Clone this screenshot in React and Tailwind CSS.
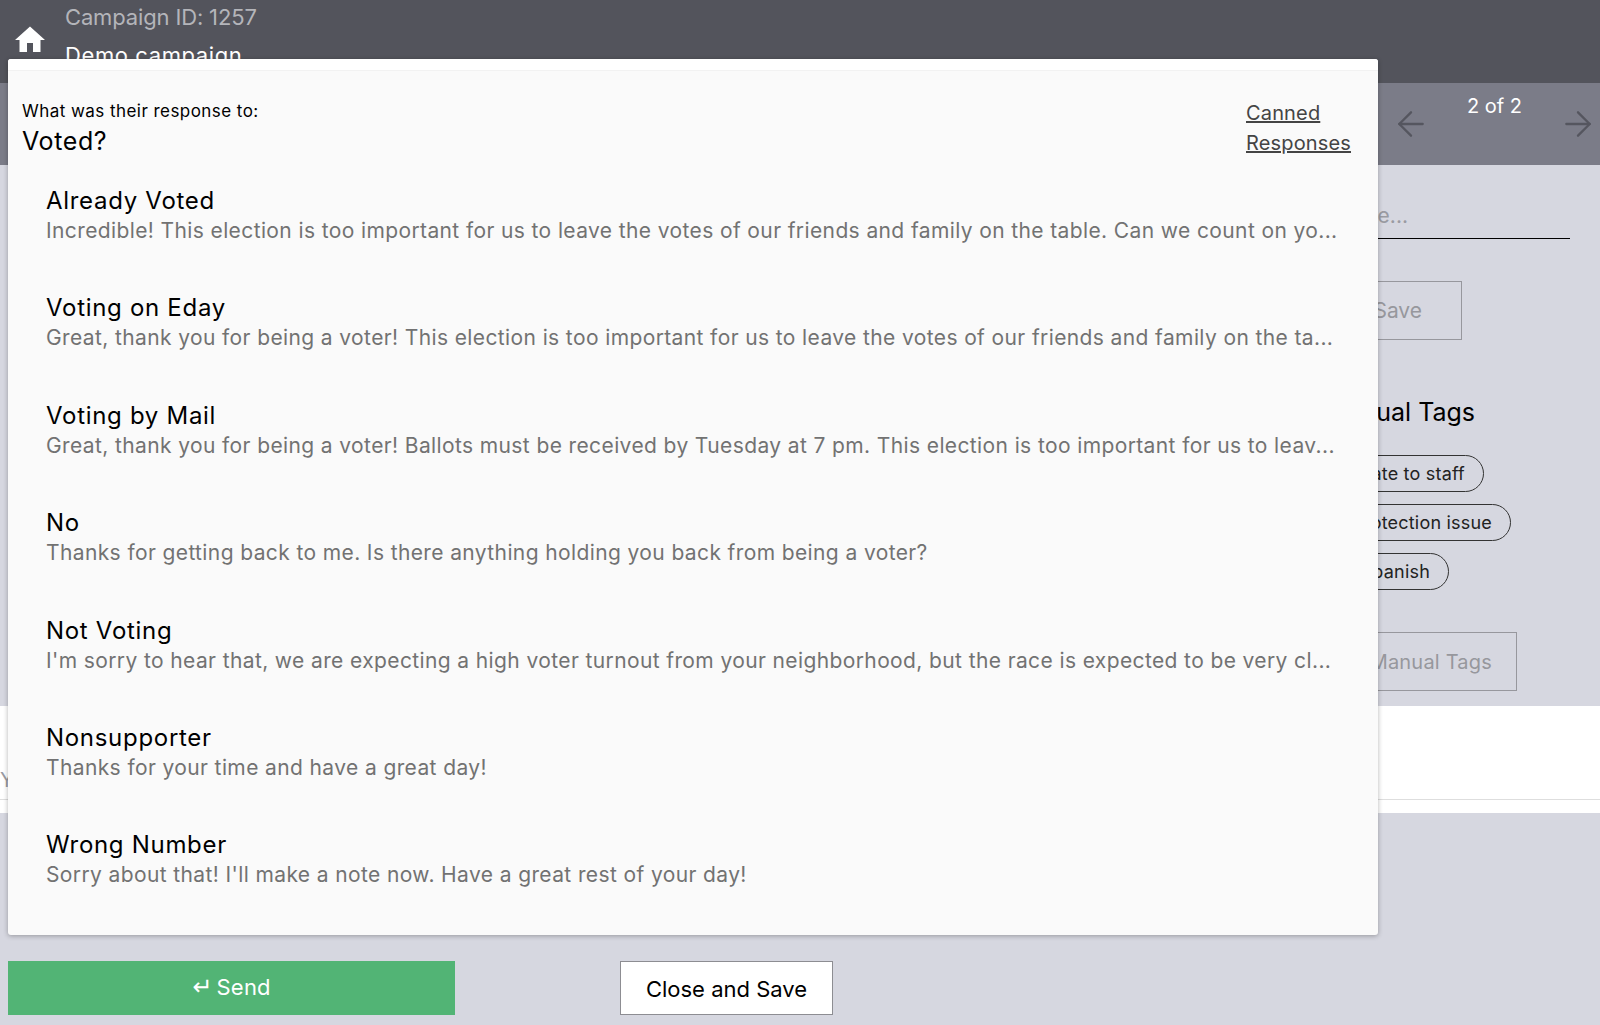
import React from 'react';
import { ArrowLeft, ArrowRight } from 'lucide-react';

const responses = [
  { title: 'Already Voted', text: 'Incredible! This election is too important for us to leave the votes of our friends and family on the table. Can we count on yo...' },
  { title: 'Voting on Eday', text: 'Great, thank you for being a voter! This election is too important for us to leave the votes of our friends and family on the ta...' },
  { title: 'Voting by Mail', text: 'Great, thank you for being a voter! Ballots must be received by Tuesday at 7 pm. This election is too important for us to leav...' },
  { title: 'No', text: 'Thanks for getting back to me. Is there anything holding you back from being a voter?' },
  { title: 'Not Voting', text: "I'm sorry to hear that, we are expecting a high voter turnout from your neighborhood, but the race is expected to be very cl..." },
  { title: 'Nonsupporter', text: 'Thanks for your time and have a great day!' },
  { title: 'Wrong Number', text: "Sorry about that! I'll make a note now. Have a great rest of your day!" },
];

const tags = [
  { label: 'Escalate to staff', width: 'w-[284px]' },
  { label: 'Voter protection issue', width: 'w-[311px]' },
  { label: 'Spanish', width: 'w-[249px]' },
];

function HomeIcon() {
  return (
    <svg viewBox="0 0 24 24" className="w-9 h-9 fill-white">
      <path d="M10 20v-6h4v6h5v-8h3L12 3 2 12h3v8z" />
    </svg>
  );
}

function ResponseDialog() {
  return (
    <div className="absolute left-2 top-[59px] w-[1370px] h-[876px] rounded-[3px] bg-[#fafafa] shadow-[0_1px_5px_rgba(0,0,0,0.3)] overflow-hidden">
      <div className="h-[12px] bg-white border-b border-[#f2f2f2]" />
      <div className="flex justify-between pl-[14px] pr-[26px] pt-[28px]">
        <div>
          <p className="text-[17px] leading-[24px] tracking-[0.45px] text-black">What was their response to:</p>
          <p className="text-[25px] leading-[36px] tracking-[0.6px] text-black">Voted?</p>
        </div>
        <a className="block w-[106px] text-[20px] leading-[30px] tracking-[0.15px] text-[#444] underline -mt-[1px]">Canned Responses</a>
      </div>
      <ul className="mt-[14px] pl-[38px] pr-[30px]">
        {responses.map((r) => (
          <li key={r.title} className="h-[107.4px] pt-[12px]">
            <p className="text-[24px] leading-[32px] tracking-[0.7px] text-black">{r.title}</p>
            <p className="text-[21px] leading-[28px] tracking-[0.385px] text-[#727272] whitespace-nowrap overflow-hidden">{r.text}</p>
          </li>
        ))}
      </ul>
    </div>
  );
}

export default function App() {
  return (
    <div className="relative h-[1025px] overflow-hidden flex flex-col bg-[#d6d7e0] font-['Inter',sans-serif]">
      <header className="h-[83px] shrink-0 bg-[#53545c] flex">
        <div className="pl-3 pt-[22px]"><HomeIcon /></div>
        <div className="pl-[17px] pt-[2px]">
          <p className="text-[22px] leading-[30px] tracking-[-0.15px] text-[#b4b5ba]">Campaign ID: 1257</p>
          <p className="text-[22px] leading-[30px] tracking-[0.6px] mt-2 text-white">Demo campaign</p>
        </div>
      </header>

      <div className="h-[82px] shrink-0 bg-[#7b7c88] flex justify-end pr-[2px]">
        <div className="flex items-start gap-[36px] text-[#55565f]">
          <ArrowLeft className="w-10 h-10 mt-[21px]" strokeWidth={1.4} />
          <span className="text-[20px] leading-[28px] mt-[9px] text-white">2 of 2</span>
          <ArrowRight className="w-10 h-10 mt-[21px]" strokeWidth={1.4} />
        </div>
      </div>

      <main className="h-[541px] shrink-0 flex justify-end pr-[30px]">
        <div className="w-[370px] pt-[30px]">
          <div className="h-[44px] border-b border-black pt-[7px] pr-[162px] text-right text-[21px] leading-[28px] text-[#9a9ba2] whitespace-nowrap">Add a note here...</div>
          <button className="block mt-[42px] w-[262px] h-[59px] border border-[#97979d] text-right pr-[39px] text-[21px] text-[#97979d]">Save</button>
          <h3 className="mt-[54px] w-[275px] text-right text-[25px] leading-[36px] text-black">Manual Tags</h3>
          <div className="mt-[25px] flex flex-col items-start gap-[12px]">
            {tags.map((t) => (
              <span key={t.label} className={`${t.width} h-[37px] pr-[18px] flex items-center justify-end rounded-full border border-[#333] text-[18px] tracking-[0.2px] text-[#222] whitespace-nowrap`}>{t.label}</span>
            ))}
          </div>
          <button className="block mt-[42px] w-[317px] h-[59px] border border-[#97979d] text-right pr-6 text-[20px] tracking-[0.2px] text-[#97979d] whitespace-nowrap">Save Manual Tags</button>
        </div>
      </main>

      <section className="h-[107px] shrink-0 bg-white flex flex-col justify-end">
        <div className="h-[14px] border-t border-[#dedede] relative">
          <span className="absolute left-0 -top-[34px] text-[20px] leading-[28px] text-[#9a9ba2]">Your message</span>
        </div>
      </section>

      <footer className="flex items-start pt-[148px] pl-2 gap-[165px]">
        <button className="w-[447px] h-[54px] pb-[2px] bg-[#52b475] text-white text-[22px] tracking-[0.2px] flex items-center justify-center gap-1">
          <span className="font-['DejaVu_Sans',sans-serif] text-[24px] leading-none">↵</span> Send
        </button>
        <button className="w-[213px] h-[54px] bg-white border border-[#8d8d92] text-[22px] pt-[2px] text-black">Close and Save</button>
      </footer>

      <ResponseDialog />
    </div>
  );
}
